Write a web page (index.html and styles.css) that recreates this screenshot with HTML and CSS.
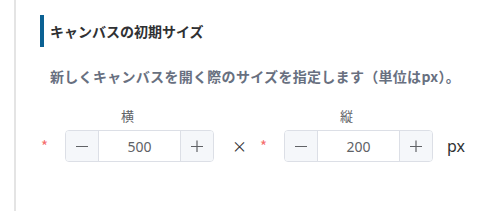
FILE: index.html
```html
<!DOCTYPE html>
<html lang="ja">
<head>
  <meta charset="UTF-8">
  <title>キャンバスの初期サイズ</title>
  <link rel="stylesheet" href="styles.css">
</head>
<body>
  <div class="panel">
    <h3 class="section-title">キャンバスの初期サイズ</h3>
    <p class="desc">新しくキャンバスを開く際のサイズを指定します（単位はpx）。</p>

    <div class="size-row">
      <div class="form-item">
        <label class="item-label">横</label>
        <div class="item-control">
          <span class="required">*</span>
          <div class="input-number">
            <span class="step step-down">
              <svg width="12" height="12" viewBox="0 0 12 12"><path d="M0 6.5h12" stroke="#606266" stroke-width="1.2"/></svg>
            </span>
            <input class="num" type="text" value="500">
            <span class="step step-up">
              <svg width="12" height="12" viewBox="0 0 12 12"><path d="M0 6.5h12M6 0.5v12" stroke="#606266" stroke-width="1.2"/></svg>
            </span>
          </div>
        </div>
      </div>

      <span class="times">×</span>

      <div class="form-item">
        <label class="item-label">縦</label>
        <div class="item-control">
          <span class="required">*</span>
          <div class="input-number">
            <span class="step step-down">
              <svg width="12" height="12" viewBox="0 0 12 12"><path d="M0 6.5h12" stroke="#606266" stroke-width="1.2"/></svg>
            </span>
            <input class="num" type="text" value="200">
            <span class="step step-up">
              <svg width="12" height="12" viewBox="0 0 12 12"><path d="M0 6.5h12M6 0.5v12" stroke="#606266" stroke-width="1.2"/></svg>
            </span>
          </div>
        </div>
      </div>

      <span class="unit">px</span>
    </div>
  </div>
</body>
</html>
```

FILE: styles.css
```css
body {
  margin: 0;
  font-family: "Noto Sans CJK JP", "Noto Sans", sans-serif;
  color: #303133;
  background: #fff;
}
.panel {
  margin-left: 14px;
  height: 211px;
  box-sizing: border-box;
  border-left: 2px solid #e4e4e4;
  padding: 15px 0 0 24px;
}
.section-title {
  margin: 0;
  height: 32px;
  line-height: 32px;
  border-left: 4px solid #0b6193;
  padding-left: 6px;
  font-size: 14px;
  font-weight: bold;
  color: #303133;
}
.desc {
  margin: 19px 0 0;
  padding-left: 10px;
  font-size: 14px;
  line-height: 20px;
  letter-spacing: 0.3px;
  font-weight: bold;
  color: #687080;
}
.size-row {
  display: flex;
  align-items: flex-end;
  margin-top: 20px;
  padding-left: 1px;
}
.form-item {
  display: flex;
  flex-direction: column;
  align-items: center;
}
.item-label {
  font-size: 13px;
  line-height: 20px;
  color: #606266;
  margin-bottom: 4px;
}
.item-control {
  display: flex;
  align-items: center;
}
.required {
  width: 24px;
  color: #f56c6c;
  font-size: 15px;
  line-height: 15px;
  height: 10px;
  margin-top: -6px;
}
.input-number {
  display: flex;
  width: 149px;
  height: 32px;
  box-sizing: border-box;
  border: 1px solid #dcdfe6;
  border-radius: 4px;
  overflow: hidden;
}
.step {
  width: 32px;
  display: flex;
  align-items: center;
  justify-content: center;
  background: #f5f7fa;
}
.step-down {
  border-right: 1px solid #dcdfe6;
}
.step-up {
  border-left: 1px solid #dcdfe6;
}
.num {
  flex: 1;
  min-width: 0;
  border: none;
  outline: none;
  padding: 0;
  text-align: center;
  font-family: "Noto Sans", sans-serif;
  font-size: 14px;
  color: #606266;
}
.times {
  margin-left: 18px;
  margin-right: 13px;
  height: 32px;
  line-height: 32px;
  font-size: 15px;
  color: #303133;
}
.unit {
  margin-left: 14px;
  height: 32px;
  line-height: 32px;
  font-family: "Noto Sans", sans-serif;
  font-size: 16px;
  color: #303133;
}
```
